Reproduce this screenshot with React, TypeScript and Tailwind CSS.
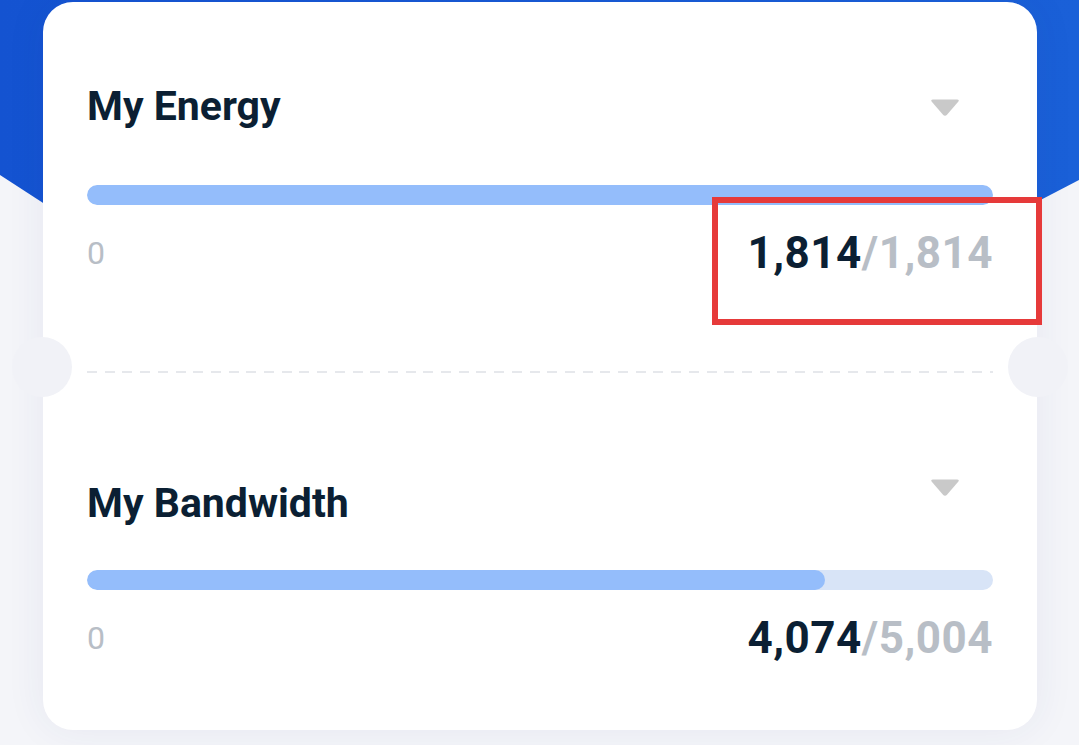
type Resource = {
  id: string;
  title: string;
  used: number;
  total: number;
};

const resources: Resource[] = [
  { id: "energy", title: "My Energy", used: 1814, total: 1814 },
  { id: "bandwidth", title: "My Bandwidth", used: 4074, total: 5004 },
];

const fmt = (n: number) => n.toLocaleString("en-US");

function Caret() {
  return (
    <svg width="30" height="19" viewBox="0 0 30 19" className="shrink-0">
      <path
        d="M3 1.5 H27 Q30 1.5 28 4 L17.2 16.6 Q15 19 12.8 16.6 L2 4 Q0 1.5 3 1.5 Z"
        fill="#c9c9c9"
      />
    </svg>
  );
}

function ResourceBlock({ item, first }: { item: Resource; first: boolean }) {
  const pct = Math.min(100, (item.used / item.total) * 100);
  return (
    <div className="flex flex-col">
      <div className="flex items-start justify-between">
        <h2
          className={`text-[41px] leading-[40px] font-bold text-[#0b1f33] ${
            first ? "mt-0" : "mt-[5px]"
          }`}
        >
          {item.title}
        </h2>
        <div className={`mr-[33px] ${first ? "mt-[12px]" : "mt-0"}`}>
          <Caret />
        </div>
      </div>
      <div
        className={`h-[20px] w-full rounded-full bg-[#d8e4f7] overflow-hidden ${
          first ? "mt-[59px]" : "mt-[47px]"
        }`}
      >
        <div
          className="h-full rounded-full bg-[#94bdfb]"
          style={{ width: `${pct}%` }}
        />
      </div>
      <div className="mt-[26px] flex items-center justify-between">
        <span className="text-[32px] leading-[32px] text-[#b8bec6]">0</span>
        <span className="text-[44px] leading-[44px] font-bold tracking-[0.5px]">
          <span className="text-[#0b1f33]">{fmt(item.used)}</span>
          <span className="text-[#b8bec6]">/{fmt(item.total)}</span>
        </span>
      </div>
    </div>
  );
}

export default function App() {
  return (
    <div
      className="relative h-[745px] w-full overflow-hidden bg-[#f4f5f9]"
      style={{ fontFamily: "Roboto, 'Liberation Sans', sans-serif" }}
    >
      {/* blue header band behind the card */}
      <div className="absolute inset-x-0 top-0 h-[520px] bg-gradient-to-r from-[#1453d1] to-[#1a60d8] [clip-path:polygon(0_0,100%_0,100%_180px,484px_489px,0_175px)]" />

      <div className="relative ml-[43px] mt-[2px] h-[728px] w-[994px] rounded-[30px] bg-white px-[44px] pt-[84px] shadow-[0_0_40px_rgba(40,60,130,0.07)]">
        {/* ticket notches */}
        <div className="absolute left-[-31px] top-[335px] h-[60px] w-[60px] rounded-full bg-[#f1f2f7]" />
        <div className="absolute right-[-31px] top-[335px] h-[60px] w-[60px] rounded-full bg-[#f1f2f7]" />

        <ResourceBlock item={resources[0]} first />

        <div className="mt-[96px] h-[2px] w-full bg-[repeating-linear-gradient(90deg,#e6e8ec_0_10px,transparent_10px_17.7px)]" />

        <div className="mt-[105px]">
          <ResourceBlock item={resources[1]} first={false} />
        </div>
      </div>

      {/* highlight around the energy total */}
      <div className="absolute left-[712px] top-[197px] h-[128px] w-[330px] border-[6px] border-[#e63a3a]" />
    </div>
  );
}
